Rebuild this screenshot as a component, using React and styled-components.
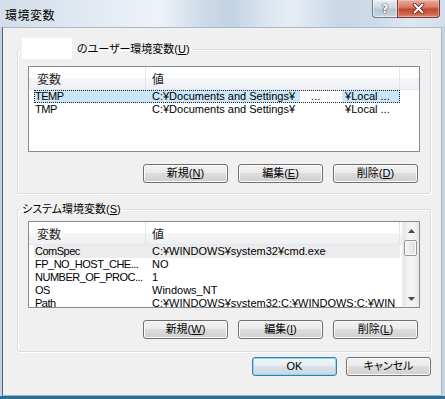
import React from "react";
import styled, { createGlobalStyle } from "styled-components";

const Global = createGlobalStyle`
  html, body { margin: 0; padding: 0; background: #f0f0f0; overflow: hidden; }
  body {
    font-family: "Liberation Sans", "Noto Sans CJK JP", sans-serif;
    font-size: 11px;
    font-feature-settings: "palt";
    color: #000;
  }
  * { box-sizing: border-box; }
`;

const Window = styled.div`
  width: 445px;
  height: 399px;
  display: flex;
  flex-direction: column;
  background: linear-gradient(90deg, #c4d2e1, #d4dfeb 25%, #c6d4e3 55%, #d2dde9 85%, #c4d2e1);
  border-bottom: 3px solid #2e6f91;
`;

const TitleBar = styled.div`
  height: 27px;
  flex-shrink: 0;
  display: flex;
  align-items: flex-start;
  background: linear-gradient(
    90deg,
    #d3dee9 0%,
    #dbe4ee 12%,
    #e8eef5 28%,
    #eef3f8 36%,
    #ccd9e7 46%,
    #c2d2e3 52%,
    #dce6f0 60%,
    #e6edf4 66%,
    #c9d7e6 76%,
    #cddae7 84%,
    #dfe7f0 92%,
    #d2deea 100%
  );
`;

const TitleText = styled.div`
  flex: 1;
  margin: 7px 0 0 5px;
  font-family: "Noto Sans CJK JP", sans-serif;
  font-size: 12px;
  line-height: 16px;
  letter-spacing: 0.5px;
`;

const TitleButtons = styled.div`
  display: flex;
  margin-right: 5px;
`;

const HelpButton = styled.div`
  width: 25px;
  height: 18px;
  display: flex;
  align-items: center;
  justify-content: center;
  border: 1px solid #6c7e92;
  border-top: none;
  border-right: none;
  border-radius: 0 0 0 4px;
  background: linear-gradient(180deg, #e4eaf1 0%, #cfd9e3 45%, #b8c6d4 55%, #c9d5e0 100%);
  box-shadow: inset 0 0 0 1px rgba(255, 255, 255, 0.55);
  color: #fff;
  font-family: "DejaVu Sans", sans-serif;
  font-size: 12px;
  font-weight: bold;
  text-shadow: 0 0 1px #3a4a5c, 0 0 1px #3a4a5c, 0 0 1px #3a4a5c;
`;

const CloseButton = styled.div`
  width: 43px;
  height: 18px;
  display: flex;
  align-items: center;
  justify-content: center;
  border: 1px solid #6e3a33;
  border-top: none;
  border-radius: 0 0 4px 0;
  background: linear-gradient(180deg, #e9a898 0%, #d9806b 40%, #c5452c 55%, #cf6a50 85%, #dc8b72 100%);
  box-shadow: inset 0 0 0 1px rgba(255, 220, 200, 0.45);
`;

const Client = styled.div`
  flex: 1;
  margin: 0 3px 0 2px;
  display: flex;
  flex-direction: column;
  padding: 13px 10px 0 14px;
  background: #f0f0f0;
  border: 1px solid #aab8c7;
  border-left-color: #50627a;
  border-bottom-color: #8fb9d0;
`;

const Group = styled.fieldset`
  margin: ${(p) => p.$mt}px 0 0 0;
  padding: 0;
  min-width: 0;
  border: 1px solid #d5dfe5;
  border-radius: 3px;
  box-shadow: inset 1px 1px 0 #fff, 1px 1px 0 #fff;
`;

const Legend = styled.legend`
  margin-left: 2px;
  padding: 0 2px;
  height: 16px;
  line-height: 16px;
  white-space: nowrap;
`;

const Redacted = styled.span`
  display: inline-block;
  vertical-align: top;
  width: 50px;
  height: 21px;
  margin: -3px 5px 0 0;
  background: #fff;
`;

const GroupBody = styled.div`
  padding: ${(p) => p.$pt}px 10px ${(p) => p.$pb}px 10px;
`;

const List = styled.div`
  height: ${(p) => p.$h}px;
  display: flex;
  border: 1px solid #848a92;
  background: #fff;
  overflow: hidden;
`;

const ListBody = styled.div`
  flex: 1;
  min-width: 0;
  overflow: hidden;
`;

const Header = styled.div`
  height: 23px;
  display: flex;
  background: linear-gradient(180deg, #ffffff 0%, #ffffff 50%, #f5f6f8 51%, #eef0f3 100%);
  border-bottom: 1px solid #e4e7eb;
`;

const HeaderCell = styled.div`
  width: ${(p) => p.$w}px;
  flex-shrink: 0;
  padding-left: ${(p) => p.$pad}px;
  display: flex;
  align-items: center;
  border-right: 1px solid #e2e5e9;
  font-size: 12px;
  color: #1e1e1e;
`;

const HeaderFill = styled.div`
  flex: 1;
`;

const Row = styled.div`
  display: flex;
  width: 366px;
  height: 13px;
  margin-left: 5px;
  line-height: 13px;
  white-space: nowrap;
  background: ${(p) =>
    p.$state === "selected" ? "#cbe6f7" : p.$state === "inactive" ? "#ececec" : "transparent"};
  outline: ${(p) => (p.$state === "selected" ? "1px dotted #222" : "none")};
  outline-offset: -1px;
`;

const Cell = styled.div`
  width: ${(p) => p.$w}px;
  flex-shrink: 0;
  padding-left: ${(p) => p.$pad}px;
  overflow: hidden;
  white-space: nowrap;
  letter-spacing: ${(p) => (p.$tight ? "-0.5px" : "normal")};
`;

const Mask = styled.span`
  display: inline-block;
  vertical-align: top;
  width: 42px;
  height: 13px;
  margin: 0 3px 0 5px;
  padding-left: 11px;
  background: #fff;
`;

const ScrollBar = styled.div`
  width: 17px;
  flex-shrink: 0;
  display: flex;
  flex-direction: column;
  background: linear-gradient(90deg, #e6e6e6, #f4f4f4 35%, #f4f4f4 65%, #e6e6e6);
  border-left: 1px solid #ededed;
`;

const Arrow = styled.div`
  height: 17px;
  display: flex;
  align-items: center;
  justify-content: center;
  margin-top: ${(p) => (p.$down ? "auto" : "0")};
`;

const Thumb = styled.div`
  height: 16px;
  margin: 1px 2px 0 1px;
  border: 1px solid #979797;
  border-radius: 2px;
  background: linear-gradient(90deg, #f6f6f6, #e9e9e9 50%, #dcdcdc);
  box-shadow: inset 0 0 0 1px #fcfcfc;
`;

const ButtonRow = styled.div`
  display: flex;
  justify-content: flex-end;
  gap: 10px;
  margin-top: 12px;
  padding-right: 2px;
`;

const DialogRow = styled.div`
  display: flex;
  justify-content: flex-end;
  gap: 9px;
  margin-top: 5px;
`;

const Button = styled.button`
  width: 85px;
  height: 19px;
  margin: 0;
  padding: 0;
  font: inherit;
  font-feature-settings: "palt";
  line-height: 17px;
  color: #000;
  border: 1px solid ${(p) => (p.$default ? "#3d7bab" : "#707070")};
  border-radius: 3px;
  background: ${(p) =>
    p.$default
      ? "linear-gradient(180deg, #f0f5f8 0%, #e7eef2 45%, #d8e2e8 50%, #cbd8df 100%)"
      : "linear-gradient(180deg, #f2f2f2 0%, #ebebeb 45%, #dddddd 50%, #cfcfcf 100%)"};
  box-shadow: inset 0 0 0 1px ${(p) => (p.$default ? "#8ed8f4" : "#fbfbfb")};
`;

function Tri({ down }) {
  return (
    <svg width="7" height="4" viewBox="0 0 7 4">
      <path d={down ? "M0 0 L7 0 L3.5 4 Z" : "M0 4 L7 4 L3.5 0 Z"} fill="#4a4a4a" />
    </svg>
  );
}

function CloseGlyph() {
  return (
    <svg width="13" height="11" viewBox="0 0 13 11">
      <path d="M2.5 1.5 L10.5 9.5 M10.5 1.5 L2.5 9.5" stroke="#5a2018" strokeWidth="3.6" strokeLinecap="round" />
      <path d="M2.5 1.5 L10.5 9.5 M10.5 1.5 L2.5 9.5" stroke="#ffffff" strokeWidth="2" strokeLinecap="round" />
    </svg>
  );
}

const userRows = [
  { name: "TEMP", state: "selected", mask: "..." },
  { name: "TMP", state: "", mask: "" },
];

const sysRows = [
  { name: "ComSpec", value: "C:¥WINDOWS¥system32¥cmd.exe", state: "inactive" },
  { name: "FP_NO_HOST_CHE...", value: "NO" },
  { name: "NUMBER_OF_PROC...", value: "1" },
  { name: "OS", value: "Windows_NT" },
  { name: "Path", value: "C:¥WINDOWS¥system32;C:¥WINDOWS;C:¥WIN" },
];

function ListHeader() {
  return (
    <Header>
      <HeaderCell $w={117} $pad={8}>変数</HeaderCell>
      <HeaderCell $w={254} $pad={6}>値</HeaderCell>
      <HeaderFill />
    </Header>
  );
}

export default function App() {
  return (
    <>
      <Global />
      <Window>
        <TitleBar>
          <TitleText>環境変数</TitleText>
          <TitleButtons>
            <HelpButton>?</HelpButton>
            <CloseButton>
              <CloseGlyph />
            </CloseButton>
          </TitleButtons>
        </TitleBar>
        <Client>
          <Group $mt={0}>
            <Legend>
              <Redacted />
              のユーザー環境変数(<u>U</u>)
            </Legend>
            <GroupBody $pt={9} $pb={10}>
              <List $h={86}>
                <ListBody>
                  <ListHeader />
                  {userRows.map((r) => (
                    <Row key={r.name} $state={r.state}>
                      <Cell $w={112} $pad={1} $tight>{r.name}</Cell>
                      <Cell $w={254} $pad={6}>
                        C:¥Documents and Settings¥<Mask>{r.mask}</Mask>¥Local ...
                      </Cell>
                    </Row>
                  ))}
                </ListBody>
              </List>
              <ButtonRow>
                <Button>新規(<u>N</u>)</Button>
                <Button>編集(<u>E</u>)</Button>
                <Button>削除(<u>D</u>)</Button>
              </ButtonRow>
            </GroupBody>
          </Group>
          <Group $mt={7}>
            <Legend>
              システム環境変数(<u>S</u>)
            </Legend>
            <GroupBody $pt={4} $pb={12}>
              <List $h={87}>
                <ListBody>
                  <ListHeader />
                  {sysRows.map((r) => (
                    <Row key={r.name} $state={r.state}>
                      <Cell $w={112} $pad={1} $tight>{r.name}</Cell>
                      <Cell $w={254} $pad={6}>{r.value}</Cell>
                    </Row>
                  ))}
                </ListBody>
                <ScrollBar>
                  <Arrow>
                    <Tri />
                  </Arrow>
                  <Thumb />
                  <Arrow $down>
                    <Tri down />
                  </Arrow>
                </ScrollBar>
              </List>
              <ButtonRow>
                <Button>新規(<u>W</u>)</Button>
                <Button>編集(<u>I</u>)</Button>
                <Button>削除(<u>L</u>)</Button>
              </ButtonRow>
            </GroupBody>
          </Group>
          <DialogRow>
            <Button $default>OK</Button>
            <Button>キャンセル</Button>
          </DialogRow>
        </Client>
      </Window>
    </>
  );
}
